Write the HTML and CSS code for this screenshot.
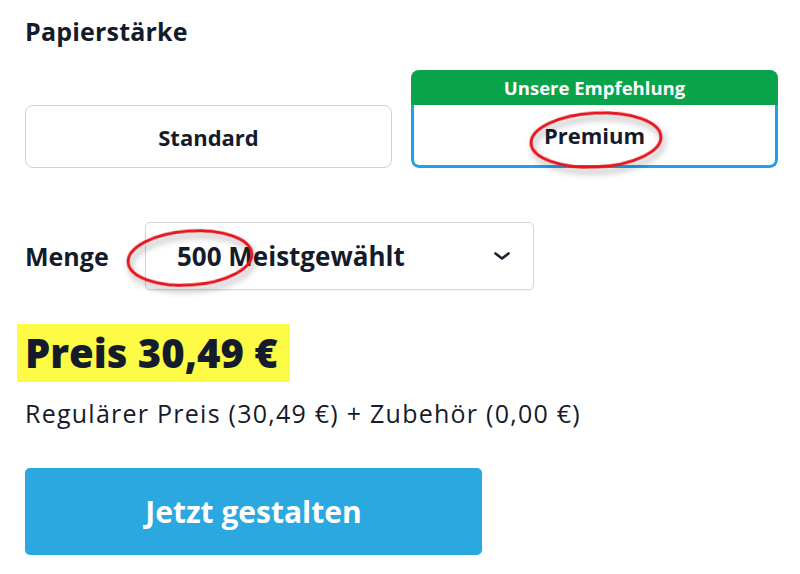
FILE: index.html
```html
<!DOCTYPE html>
<html lang="de">
<head>
<meta charset="utf-8">
<link rel="stylesheet" href="styles.css">
</head>
<body>
<main class="page">
  <h2 class="title">Papierstärke</h2>
  <div class="options">
    <div class="opt opt-standard">Standard</div>
    <div class="opt-rec">
      <div class="rec-head">Unsere Empfehlung</div>
      <div class="rec-body">Premium</div>
    </div>
  </div>
  <div class="qty">
    <span class="qty-label">Menge</span>
    <div class="select">
      <span class="select-text">500 Meistgewählt</span>
      <svg class="chev" width="18" height="10" viewBox="0 0 18 10"><path d="M2.5 2.5 L9 7.5 L15.5 2.5" fill="none" stroke="#1b2230" stroke-width="2.6" stroke-linecap="round" stroke-linejoin="round"/></svg>
    </div>
  </div>
  <div class="price"><span class="price-hl">Preis 30,49 €</span></div>
  <p class="breakdown">Regulärer Preis (30,49 €) + Zubehör (0,00 €)</p>
  <button class="cta">Jetzt gestalten</button>
  <svg class="marks" width="800" height="574" viewBox="0 0 800 574">
    <defs>
      <filter id="sh" x="-20%" y="-30%" width="140%" height="180%">
        <feDropShadow dx="2" dy="5" stdDeviation="3" flood-color="#000" flood-opacity="0.35"/>
      </filter>
    </defs>
    <ellipse cx="596" cy="140" rx="65" ry="27" transform="rotate(-3 596 140)" fill="none" stroke="#e3141b" stroke-width="3" filter="url(#sh)"/>
    <ellipse cx="190" cy="258" rx="62" ry="27" transform="rotate(-4 190 258)" fill="none" stroke="#e3141b" stroke-width="3" filter="url(#sh)"/>
  </svg>
</main>
</body>
</html>
```
FILE: styles.css
```css
* { box-sizing: border-box; }
html, body { margin: 0; padding: 0; background: #fff; }
body {
  font-family: "Open Sans", "Noto Sans", sans-serif;
  color: #141b2b;
}
.page {
  position: relative;
  width: 800px;
  height: 574px;
  padding: 15px 0 0 25px;
  overflow: hidden;
}
.title {
  margin: 0;
  font-size: 25px;
  font-weight: 700;
  line-height: 32px;
  letter-spacing: 0.2px;
}
.options {
  display: flex;
  align-items: flex-end;
  gap: 19px;
  margin-top: 23px;
}
.opt {
  width: 367px;
  height: 63px;
  border: 1.5px solid #d2d2d2;
  border-radius: 8px;
  display: flex;
  align-items: center;
  justify-content: center;
  font-size: 22px;
  font-weight: 700;
}
.opt-rec {
  width: 367px;
  height: 98px;
  border-radius: 8px;
  overflow: hidden;
  display: flex;
  flex-direction: column;
}
.rec-head {
  height: 35px;
  background: #08a34a;
  color: #fff;
  font-size: 18.5px;
  font-weight: 700;
  display: flex;
  align-items: center;
  justify-content: center;
}
.rec-body {
  flex: 1;
  border: 3px solid #1ea1ea;
  border-top: 0;
  border-radius: 0 0 8px 8px;
  display: flex;
  align-items: center;
  justify-content: center;
  font-size: 22px;
  font-weight: 700;
}
.qty {
  display: flex;
  align-items: center;
  margin-top: 54px;
}
.qty-label {
  width: 120px;
  font-size: 25px;
  font-weight: 700;
}
.select {
  width: 389px;
  height: 68px;
  border: 1.5px solid #d6d6d6;
  border-radius: 5px;
  display: flex;
  align-items: center;
  padding: 0 22px 0 31px;
  box-shadow: 0 1px 2px rgba(0,0,0,0.06);
}
.select-text {
  flex: 1;
  font-size: 26px;
  font-weight: 700;
}
.chev { display: block; }
.price {
  margin: 34px 0 0 -8px;
}
.price-hl {
  display: inline-block;
  background: #fdfb45;
  font-size: 40px;
  font-weight: 800;
  line-height: 58px;
  padding: 0 12px 0 8px;
}
.breakdown {
  margin: 16px 0 0;
  font-size: 25px;
  line-height: 30px;
  font-weight: 400;
  letter-spacing: 1.25px;
}
.cta {
  display: block;
  margin-top: 40px;
  width: 457px;
  height: 87px;
  border: 0;
  border-radius: 5px;
  background: #2ca8e1;
  color: #fff;
  font-family: inherit;
  font-size: 30px;
  font-weight: 700;
}
.marks {
  position: absolute;
  left: 0;
  top: 0;
  pointer-events: none;
}
```
